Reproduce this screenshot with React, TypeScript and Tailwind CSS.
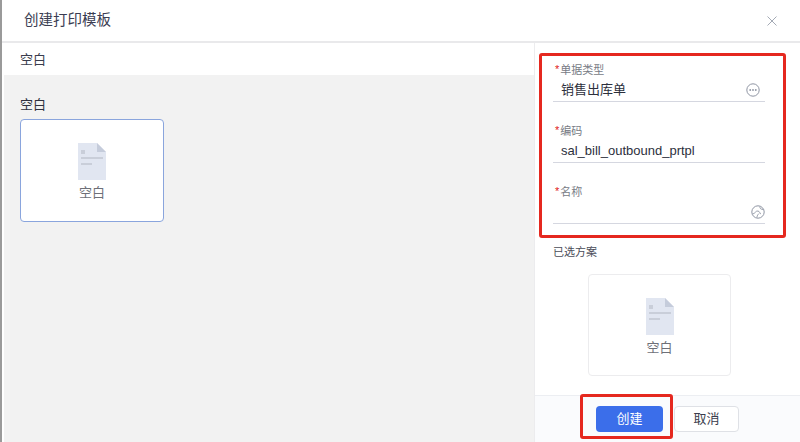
import React from "react";

const font = { fontFamily: '"Liberation Sans", "Noto Sans CJK SC", sans-serif' };

const DocIcon = () => (
  <svg width="28" height="37" viewBox="0 0 28 37" className="block">
    <path d="M0 0H19L28 9V37H0Z" fill="#e1e6f1" />
    <path d="M19 0L28 9H19Z" fill="#c5ccdb" />
    <rect x="3" y="7" width="4" height="4" fill="#c9ced9" />
    <rect x="3" y="14" width="22" height="2" fill="#c9ced9" />
    <rect x="3" y="20" width="11" height="2" fill="#c9ced9" />
  </svg>
);

const Field = ({
  label,
  value,
  icon,
}: {
  label: string;
  value?: string;
  icon?: React.ReactNode;
}) => (
  <div className="w-[212px] h-[39px] ml-[18px] mb-[22px]">
    <div className="flex h-[14px] items-center pl-[2px] text-[11px] leading-[14px] text-[#777b85]">
      <span className="text-[#e02020] mr-[1px] -mt-[2px]">*</span>
      {label}
    </div>
    <div className="h-[25px] flex items-center justify-between border-b border-[#d5d7e0] pl-[8px] pt-[1px]">
      <span className="text-[13px] text-[#2c2f3c] whitespace-nowrap">{value}</span>
      {icon}
    </div>
  </div>
);

const MoreIcon = () => (
  <svg width="14" height="14" viewBox="0 0 14 14" fill="none" className="mr-[5px]">
    <circle cx="7" cy="7" r="6.2" stroke="#8f95a3" />
    <circle cx="4.2" cy="7" r="0.9" fill="#8f95a3" />
    <circle cx="7" cy="7" r="0.9" fill="#8f95a3" />
    <circle cx="9.8" cy="7" r="0.9" fill="#8f95a3" />
  </svg>
);

const GlobeIcon = () => (
  <svg width="14" height="14" viewBox="0 0 14 14" fill="none" className="mr-0">
    <circle cx="7" cy="7" r="6.2" stroke="#8f95a3" />
    <path d="M1.5 9C4 9 4.500 5.500 7 6C9 6.500 8.500 8.500 10 9M6 12.500C6 10.500 7 9.500 8 8.500M9 1.500C8.500 3.500 10 4.500 12.500 4.500" stroke="#8f95a3" strokeWidth="0.9" />
  </svg>
);

export default function App() {
  return (
    <div style={font} className="relative w-[800px] h-[442px] overflow-hidden bg-white flex">
      <div className="w-[2px] bg-[#9a9a9a] shrink-0" />
      <div className="flex-1 flex flex-col min-w-0">
        <header className="h-[43px] shrink-0 flex items-center justify-between border-b-2 border-[#e9e9eb] pl-[22px] pr-[23px]">
          <h1 className="text-[14.500px] text-[#3a3d52] font-normal">创建打印模板</h1>
          <svg width="10" height="10" viewBox="0 0 10 10" fill="none" stroke="#9aa0ad" strokeWidth="0.9">
            <path d="M0.500 0.500L9.500 9.500M9.500 0.500L0.500 9.500" />
          </svg>
        </header>
        <div className="flex-1 flex min-h-0">
          <section className="w-[532px] shrink-0 flex flex-col">
            <div className="h-[32px] shrink-0 flex items-center pl-[18px] pt-[2px] text-[13px] text-[#3a3d4d]">空白</div>
            <div className="flex-1 ml-[2px] bg-[#f2f2f2] pl-[16px] pt-[22px]">
              <div className="text-[13px] leading-[16px] text-[#2f3140] mb-[6px]">空白</div>
              <div className="w-[144px] h-[103px] bg-white border border-[#8aa5dd] rounded-[4px] flex flex-col items-center pt-[23px]">
                <DocIcon />
                <span className="text-[13px] leading-[18px] mt-[4px] text-[#6e7078]">空白</span>
              </div>
            </div>
          </section>
          <aside className="flex-1 flex flex-col border-l border-[#ececee] min-w-0">
            <div className="flex-1 pt-[20px]">
              <div className="h-[182px]">
                <Field label="单据类型" value="销售出库单" icon={<MoreIcon />} />
                <Field label="编码" value="sal_bill_outbound_prtpl" />
                <Field label="名称" icon={<GlobeIcon />} />
              </div>
              <div className="text-[11px] leading-[14px] text-[#4a4c58] ml-[18px]">已选方案</div>
              <div className="w-[143px] h-[102px] ml-[53px] mt-[15px] border border-[#ececee] rounded-[4px] flex flex-col items-center pt-[23px]">
                <DocIcon />
                <span className="text-[13px] leading-[18px] mt-[4px] text-[#6e7078]">空白</span>
              </div>
            </div>
            <footer className="h-[47px] shrink-0 border-t border-[#eceef2] bg-[#fafbfd] flex items-start pl-[61px] pt-[10px] gap-[11px]">
              <button className="w-[67px] h-[26px] rounded-[4px] bg-[#3b6eea] text-white text-[13px]">创建</button>
              <button className="w-[65px] h-[26px] rounded-[4px] bg-white border border-[#dfe1e6] text-[#3a3d4d] text-[13px]">取消</button>
            </footer>
          </aside>
        </div>
      </div>
      <div className="absolute left-[539px] top-[53px] w-[247px] h-[185px] border-[3px] border-[#e5281f] rounded-[3px]" />
      <div className="absolute left-[580px] top-[394px] w-[93px] h-[45px] border-[3px] border-[#e5281f] rounded-[3px]" />
    </div>
  );
}
